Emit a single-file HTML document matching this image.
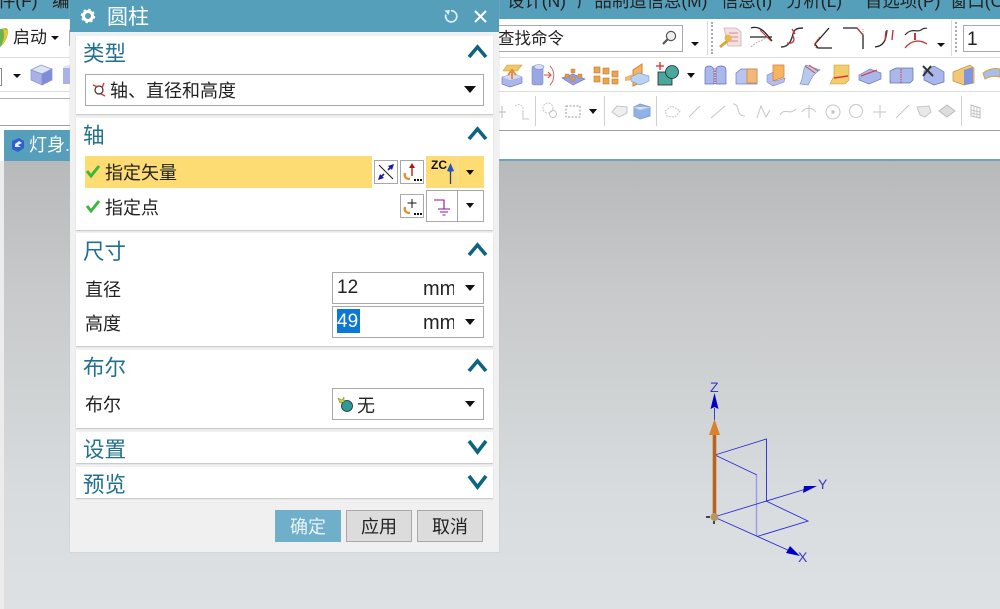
<!DOCTYPE html>
<html><head><meta charset="utf-8">
<style>
*{box-sizing:border-box}
html,body{margin:0;padding:0;width:1000px;height:609px;overflow:hidden;background:#fff}
body{position:relative;font-family:"Liberation Sans","Noto Sans CJK SC",sans-serif;color:#222}
.a{position:absolute}
.t{position:absolute;white-space:nowrap;line-height:1}
.sec{position:absolute;left:76px;width:417px;background:#fff;box-shadow:0 1px 1px #c4c4c4}
.h{position:absolute;left:83px;font-size:21.5px;color:#20708e;line-height:1;white-space:nowrap}
.l{position:absolute;font-size:18px;color:#222;line-height:1;white-space:nowrap}
.box{position:absolute;background:#fff;border:1px solid #a8a8a8}
.arr{position:absolute;width:0;height:0;border-left:6.5px solid transparent;border-right:6.5px solid transparent;border-top:7px solid #111}
.arrs{position:absolute;width:0;height:0;border-left:4.5px solid transparent;border-right:4.5px solid transparent;border-top:5px solid #111}
.btn{position:absolute;top:510px;width:66px;height:32px;background:#dcdcdc;border:1px solid #a8a8a8;font-size:18px;line-height:32px;text-align:center;color:#222}
svg{position:absolute;overflow:visible}
</style></head><body>

<!-- menu bar -->
<div class="a" style="left:0;top:0;width:1000px;height:19px;background:#569fbb"></div>
<div class="a" style="left:0;top:0;width:1000px;height:19px;overflow:hidden;font-size:17.4px;color:#222;line-height:24px;white-space:nowrap">
<span class="a" style="left:-2px;top:-11px">件(F)</span>
<span class="a" style="left:52px;top:-11px">编</span>
<span class="a" style="left:507px;top:-11px">设计(N)</span>
<span class="a" style="left:577px;top:-11px">产品制造信息(M)</span>
<span class="a" style="left:721px;top:-11px">信息(I)</span>
<span class="a" style="left:786px;top:-11px">分析(L)</span>
<span class="a" style="left:865px;top:-11px">首选项(P)</span>
<span class="a" style="left:950px;top:-11px">窗口(O)</span>
</div>

<!-- toolbar lines -->
<div class="a" style="left:0;top:57px;width:1000px;height:1px;background:#dedede"></div>
<div class="a" style="left:0;top:91px;width:1000px;height:1px;background:#dedede"></div>
<div class="a" style="left:499px;top:130px;width:501px;height:1px;background:#a0a0a0"></div>
<div class="a" style="left:0;top:98px;width:72px;height:1px;background:#b0b0b0"></div>
<div class="a" style="left:0;top:125px;width:72px;height:1px;background:#a0a0a0"></div>
<div class="a" style="left:499px;top:159px;width:501px;height:3px;background:#6ba3b9"></div>

<!-- viewport -->
<div class="a" style="left:4px;top:161px;width:996px;height:448px;background:linear-gradient(#b7b9ba,#c8cacb 30%,#d8dcde 75%,#dde1e3)"></div>
<div class="a" style="left:0;top:161px;width:4px;height:448px;background:#ececec"></div>

<!-- tab -->
<div class="a" style="left:4px;top:130px;width:68px;height:31px;background:#569fbb"></div>
<div class="t" style="left:29px;top:136px;font-size:18px;color:#fff">灯身.</div>
<svg style="left:10px;top:137px" width="16" height="16" viewBox="0 0 16 16"><path d="M2 4 9 1 14 4V11L8 15 2 12Z" fill="#2f5fd0"/><path d="M9 4 5 7V10L11 10 8 8 12 6Z" fill="#e8eeff"/></svg>

<!-- toolbar left -->
<svg style="left:0;top:27px" width="26" height="22" viewBox="0 0 26 22"><path d="M-2 3C6 0 8 1 8 4 8 11 4 17 0 20-3 17-4 8-2 3Z" fill="#6fb24a"/><path d="M3 2 8 3C8 10 4 16 1 19 4 13 5 8 3 2Z" fill="#e8c63c"/></svg>
<div class="t" style="left:13px;top:29px;font-size:17px">启动</div>
<div class="arrs" style="left:51px;top:36px;border-left-width:4px;border-right-width:4px;border-top-width:4px"></div>
<div class="a" style="left:69px;top:30px;width:1px;height:16px;background:#aaa"></div>
<div class="a" style="left:-6px;top:68px;width:8px;height:18px;border:1px solid #888;background:#fff"></div>
<div class="arrs" style="left:13px;top:74px;border-left-width:4px;border-right-width:4px;border-top-width:4px"></div>
<svg style="left:30px;top:64px" width="24" height="22" viewBox="0 0 24 22"><path d="M1 6 11 1 22 5 12 10Z" fill="#dfe3f6" stroke="#8a94c8" stroke-width=".7"/><path d="M1 6 12 10V21L1 16Z" fill="#a9b2e6" stroke="#8a94c8" stroke-width=".7"/><path d="M22 5 12 10V21L22 16Z" fill="#7f8cda" stroke="#8a94c8" stroke-width=".7"/></svg>
<svg style="left:62px;top:64px" width="10" height="22" viewBox="0 0 10 22"><ellipse cx="8" cy="4" rx="7" ry="3" fill="#dfe3f6"/><rect x="1" y="4" width="9" height="16" fill="#a9b2e6"/></svg>

<!-- search box -->
<div class="box" style="left:497px;top:25px;width:186px;height:27px;border-left:0"></div>
<div class="t" style="left:498px;top:31px;font-size:16.5px">查找命令</div>
<svg style="left:660px;top:29px" width="18" height="18" viewBox="0 0 18 18" fill="none" stroke="#555"><circle cx="11" cy="7" r="4.6" stroke-width="1.2" fill="#eee"/><path d="M7.6 10.4 3 15" stroke-width="2.2"/></svg>
<div class="arrs" style="left:691px;top:42px;border-top-width:4px;border-left-width:4px;border-right-width:4px"></div>
<div class="a" style="left:707px;top:21px;width:0;height:34px;border-left:1px solid #ddd"></div>
<div class="a" style="left:711px;top:22px;width:0;height:32px;border-left:2px dotted #aaa"></div>

<svg style="left:0;top:0" width="1000" height="160" viewBox="0 0 1000 160" fill="none">
<!-- row 1 curve icons -->
<path d="M724 28h12l5 4v14h-13z" fill="#f6dfe0" stroke="#c9b2b8" stroke-width=".8"/>
<path d="M729 33h9M729 37h9M729 41h9" stroke="#d98a90"/>
<path d="M720 47 731 38" stroke="#d9a441" stroke-width="3"/><circle cx="728" cy="38" r="3.5" fill="#e6b84f"/>
<path d="M750 37H772" stroke="#222" stroke-width="1.2"/><path d="M751 28C760 25 766 33 772 41" stroke="#222" stroke-width="1.3"/><path d="M751 47C757 41 762 41 769 36" stroke="#c0a9a9" stroke-dasharray="2 1"/><path d="M760 30 771 41" stroke="#d33" stroke-width="1.1"/>
<path d="M781 47C790 47 792 38 793 34 794 30 796 28 803 28" stroke="#333" stroke-width="1.4"/><path d="M792 29 795 34M787 43C794 44 795 40 793 36" stroke="#c33" stroke-width="1.3"/>
<path d="M829 28 815 44 818 48H832" stroke="#222" stroke-width="1.3"/><path d="M820 37C815 42 813 46 817 48" stroke="#c33" stroke-dasharray="2 1"/>
<path d="M843 28H857L863 35V49" stroke="#222" stroke-width="1.3"/><path d="M857 28 863 35" stroke="#c33"/><path d="M863 29V35" stroke="#aaa" stroke-dasharray="1 1"/>
<path d="M875 47C884 46 886 40 887 30" stroke="#222" stroke-width="1.3"/><path d="M886 31 885 41M893 30 892 40" stroke="#c33" stroke-width="1.4"/>
<path d="M905 35C912 27 917 33 921 30 925 27 926 29 927 28" stroke="#333" stroke-width="1.2"/><path d="M905 48C912 39 921 40 927 44" stroke="#c33" stroke-width="1.3"/><path d="M915 33 915 40" stroke="#c33" stroke-width="2"/>
<path d="M937 43h8l-4 4z" fill="#111"/>
<path d="M951.500 20V56" stroke="#ddd"/>
<path d="M956 22V54" stroke="#aaa" stroke-width="2" stroke-dasharray="2 2"/>

<!-- row 2 -->
<path d="M503 71 507 65H522L517 71Z" fill="#f2c766" stroke="#c59a3c" stroke-width=".6"/>
<path d="M502 77 514 74 522 77V83L510 87 502 84Z" fill="#a9b7ea" stroke="#6f7cd0" stroke-width=".7"/>
<path d="M502 77 510 80 522 77 514 74Z" fill="#d4daf5"/>
<path d="M512 72V79M508 75 512 70 516 75" stroke="#e28a2d" stroke-width="1.800"/>
<rect x="532" y="66" width="11" height="19" rx="2" fill="#98a7e2" stroke="#7a88c8" stroke-width=".6"/><ellipse cx="539" cy="67" rx="5" ry="2.500" fill="#d6dcf4" stroke="#7a88c8" stroke-width=".6"/>
<path d="M544 75H551M548 72 551 75 548 78" stroke="#d84a3a" stroke-width="1.100"/><path d="M550 66C555 71 555 80 550 85" stroke="#c66"/>
<path d="M562 78 573 74 585 79 573 85Z" fill="#8fa3e6" stroke="#6f7cd0" stroke-width=".7"/>
<g fill="#e09a4a" stroke="#b87730" stroke-width=".4"><rect x="565" y="74" width="4" height="4"/><rect x="571" y="69" width="4" height="4"/><rect x="578" y="74" width="4" height="4"/><rect x="571" y="77" width="4" height="4"/></g>
<g fill="#eba550" stroke="#c2762a" stroke-width=".6"><rect x="594" y="67" width="6" height="6"/><rect x="603" y="68" width="6" height="6"/><rect x="612" y="71" width="6" height="6"/><rect x="594" y="76" width="6" height="6"/><rect x="603" y="78" width="6" height="6"/><rect x="612" y="79" width="6" height="5"/></g>
<path d="M633 70 642 64V82L633 86Z" fill="#f4b45e" stroke="#db7a2b"/><path d="M625 77 633 74V80L625 81Z" fill="#f2b868"/><path d="M631 77 639 73 649 76 649 81 640 85 631 81Z" fill="#b8d3f2" stroke="#7a94d0" stroke-width=".6"/>
<rect x="658" y="72" width="14" height="13" fill="#49a89a" stroke="#224" stroke-width=".8"/><circle cx="672" cy="72" r="6.500" fill="#49a89a" stroke="#224" stroke-width=".8"/><path d="M656 66H664M660 62V70" stroke="#e22" stroke-width="1.300"/>
<path d="M687 73h8l-4 5z" fill="#111"/>
<path d="M705 84V70Q705 66 709 66T714 70V84Z" fill="#a9b7ea" stroke="#5f6fbd" stroke-width=".7"/><path d="M716 84V70Q716 66 721 66T726 70V84Z" fill="#a9b7ea" stroke="#5f6fbd" stroke-width=".7"/><path d="M715 68V84" stroke="#d44" stroke-dasharray="1.500 1"/>
<path d="M736 73 741 69H757V84H736Z" fill="#b9c4ef" stroke="#6f7cd0" stroke-width=".7"/><rect x="747" y="69" width="10" height="14" fill="#f1b878" stroke="#d7812f" stroke-width=".7"/>
<path d="M767 75 776 71V81L785 78 784 82 773 86 767 82Z" fill="#b3bff0" stroke="#7a88c8" stroke-width=".6"/><path d="M773 65H784V77L773 81Z" fill="#f3b562" stroke="#db7a2b" stroke-width=".7"/>
<path d="M800 84C804 77 802 70 806 65L820 70C813 74 812 78 808 85Z" fill="#b8c9ef" stroke="#7a94d0" stroke-width=".7"/><path d="M805 66 815 73M809 65 818 71" stroke="#d84a3a"/>
<path d="M830 84 834 76V65H849V80L845 84Z" fill="#f2cd6c" stroke="#c69a36" stroke-width=".6"/><path d="M834 78 848 76" stroke="#d33" stroke-width="1.400"/>
<path d="M859 75 870 69 881 73V79L869 84 859 80Z" fill="#a9b7ea" stroke="#6f7cd0" stroke-width=".7"/><path d="M861 76 877 70" stroke="#d33" stroke-width="1.100"/>
<path d="M890 71 896 68H913V80L910 83H890Z" fill="#a9b7ea" stroke="#5f6fbd" stroke-width=".7"/><path d="M901 69V83" stroke="#d33" stroke-dasharray="1.500 1"/>
<path d="M924 71 934 66 944 72V82L934 85 924 80Z" fill="#a9b7ea" stroke="#5f6fbd" stroke-width=".7"/><path d="M923 66 933 76M931 66 923 76" stroke="#333" stroke-width="2"/>
<path d="M953 72 970 65 974 68V83L964 85 953 81Z" fill="#f1c878" stroke="#c6923a" stroke-width=".7"/><path d="M964 70 973 67V83L964 85Z" fill="#7f95dd"/>
<path d="M983 73C990 68 996 68 1000 69V77C994 76 990 76 985 79Z" fill="#a9bde9" stroke="#d2a33c"/>

<!-- row 3 gray -->
<g stroke="#c6c6c6" stroke-width="1">
<path d="M497 112 H506 M502 106V118" stroke="#bbb"/>
<path d="M515 106C520 102 524 107 523 110" stroke-dasharray="2 1"/><path d="M523 110V119H529" />
<circle cx="548" cy="108" r="5" stroke-dasharray="2 1"/><circle cx="553" cy="114" r="3.500"/>
<rect x="566" y="106" width="14" height="11" stroke-dasharray="2 1.500" stroke="#999"/>
<path d="M535.500 96V126M604.500 96V126M656.500 96V126M961.500 96V126" stroke="#d0d0d0"/>
<path d="M612 112 617 106 627 107 627 113 619 117Z" fill="#eee"/>
<path d="M634 107 640 104 650 107 650 116 640 119 634 116Z" fill="#8fb2e8" stroke="#7fa0d8"/><path d="M634 107 640 110 650 107" fill="#d8e3f5"/>
<path d="M665 111 672 106 680 111 675 117 667 116Z" stroke-dasharray="2 1"/>
<path d="M689 117 700 106"/><path d="M711 118 725 106"/><path d="M733 104C741 104 735 116 745 116"/>
<path d="M757 118 761 106 766 117 770 110"/><path d="M780 115C785 107 789 116 796 109"/>
<path d="M802 112C805 107 812 107 816 112M809 105V118"/>
<circle cx="833" cy="112" r="7"/><circle cx="833" cy="112" r="1.200" fill="#bbb"/><circle cx="856" cy="111" r="6.500"/><path d="M873 112H886M880 105V118"/><path d="M896 118 909 105"/>
<path d="M917 107 929 106 931 112 925 117 920 115Z" fill="#e8e8e8"/>
<path d="M939 111 947 105 955 111 947 117Z" fill="#ddd" stroke="#bbb"/>
<path d="M971 105 980 108V118L971 116Z" stroke="#bbb"/><path d="M974 106V117M977 107V118M971 110 980 112M971 113 980 115"/>
</g>
<path d="M589 109h8l-4 5z" fill="#111"/>
</svg>

<!-- box "1" -->
<div class="box" style="left:963px;top:25px;width:45px;height:27px"></div>
<div class="t" style="left:967px;top:30px;font-size:19px">1</div>

<!-- triad -->
<svg style="left:0;top:0" width="1000" height="609" viewBox="0 0 1000 609" fill="none">
<g stroke="#2a2ad8" stroke-width=".9">
<path d="M715 455 766.500 439V501M715 455 757 475"/>
<path d="M756.500 475V536.500" stroke="#9a9af0" stroke-width="1.400"/>
<path d="M766 501 808 521 757 536.500M714 517 806 489M714 517 790 551"/>
<path d="M714.500 420V408"/>
</g>
<path d="M714.500 393 718.500 409 714.500 407 710.500 409Z" fill="#0000c8"/>
<path d="M817 486 803 493 804 486Z" fill="#0000c8"/>
<path d="M800 556 786 553 790 546Z" fill="#0000c8"/>
<path d="M714.500 432V516" stroke="#b8651b" stroke-width="3.600"/>
<path d="M714.500 419 720 435H709Z" fill="#d9822b"/>
<circle cx="714.500" cy="517" r="4" fill="#b49a5e"/>
<path d="M706 517H710M714 521V524" stroke="#112" stroke-width="1.500"/>
</svg>
<div class="t" style="left:710px;top:380px;font-size:14px;color:#3a3ac0">Z</div>
<div class="t" style="left:818px;top:477px;font-size:14px;color:#3a3ac0">Y</div>
<div class="t" style="left:798px;top:550px;font-size:14px;color:#3a3ac0">X</div>

<!-- dialog -->
<div class="a" style="left:70px;top:0;width:429px;height:552px;background:#f0f0f0;box-shadow:0 0 1px #bbb"></div>
<div class="a" style="left:70px;top:0;width:429px;height:32px;background:#569fbb"></div>
<svg style="left:80px;top:8px" width="16" height="16" viewBox="0 0 16 16"><circle cx="8" cy="8" r="4.500" fill="none" stroke="#fff" stroke-width="3"/><circle cx="8" cy="8" r="6.200" fill="none" stroke="#fff" stroke-width="2" stroke-dasharray="2.400 2.470"/></svg>
<div class="t" style="left:107px;top:7px;font-size:21px;color:#fff">圆柱</div>
<svg style="left:444px;top:9px" width="15" height="15" viewBox="0 0 15 15" fill="none"><path d="M7 1.700A5.600 5.600 0 1 1 1.900 5.500" stroke="#dfeef4" stroke-width="1.700"/><path d="M.5 1.500 6 1 4.500 6Z" fill="#dfeef4"/></svg>
<svg style="left:474px;top:10px" width="13" height="13" viewBox="0 0 13 13"><path d="M1 1 12 12M12 1 1 12" stroke="#fff" stroke-width="2"/></svg>

<div class="sec" style="top:36px;height:78px"></div>
<div class="sec" style="top:118px;height:112px"></div>
<div class="sec" style="top:233px;height:113px"></div>
<div class="sec" style="top:350px;height:78px"></div>
<div class="sec" style="top:432px;height:31px"></div>
<div class="sec" style="top:467px;height:31px"></div>

<div class="h" style="top:44px">类型</div>
<div class="h" style="top:126px">轴</div>
<div class="h" style="top:242px">尺寸</div>
<div class="h" style="top:358px">布尔</div>
<div class="h" style="top:440px">设置</div>
<div class="h" style="top:475px">预览</div>

<svg style="left:0;top:0" width="500" height="500" viewBox="0 0 500 500" fill="none" stroke="#0d6480" stroke-width="3.600">
<path d="M469 57 477.500 47 486 57"/><path d="M469 139 477.500 129 486 139"/><path d="M469 255 477.500 245 486 255"/><path d="M469 371 477.500 361 486 371"/>
<path d="M469 441 477.500 452 486 441"/><path d="M469 476 477.500 487 486 476"/>
</svg>

<!-- type dropdown -->
<div class="box" style="left:85px;top:74px;width:399px;height:32px"></div>
<svg style="left:92px;top:82px" width="16" height="16" viewBox="0 0 16 16" fill="none"><circle cx="7" cy="8" r="4" stroke="#333" stroke-width="1.200"/><path d="M1 3 6 5M12 1 10 6M9 12 13 14" stroke="#d33" stroke-width="1.400"/></svg>
<div class="l" style="left:110px;top:82px">轴、直径和高度</div>
<div class="arr" style="left:464px;top:86px"></div>

<!-- axis rows -->
<div class="a" style="left:85px;top:156px;width:287px;height:32px;background:#fddd73"></div>
<svg style="left:86px;top:164px" width="14" height="14" viewBox="0 0 14 14"><path d="M1 7 5 12 13 2" fill="none" stroke="#3cb73c" stroke-width="3"/></svg>
<div class="l" style="left:105px;top:164px">指定矢量</div>
<svg style="left:86px;top:199px" width="14" height="14" viewBox="0 0 14 14"><path d="M1 7 5 12 13 2" fill="none" stroke="#3cb73c" stroke-width="3"/></svg>
<div class="l" style="left:105px;top:199px">指定点</div>

<div class="box" style="left:374px;top:160px;width:24px;height:24px"></div>
<svg style="left:374px;top:160px" width="24" height="24" viewBox="0 0 24 24" fill="none"><path d="M5 5 19 19" stroke="#222" stroke-width="1.100"/><path d="M19 5 14 10M5 19 10 14" stroke="#1a1ab0" stroke-width="1.600"/><path d="M20 4 14 6 18 10ZM4 20 10 18 6 14Z" fill="#1a1ab0"/></svg>
<div class="box" style="left:400px;top:160px;width:24px;height:24px"></div>
<svg style="left:400px;top:160px" width="24" height="24" viewBox="0 0 24 24" fill="none"><path d="M12 16V7" stroke="#a11" stroke-width="1.300"/><path d="M12 3 15 8H9Z" fill="#b11"/><path d="M5 13C4 17 6 19 10 19" stroke="#e09030" stroke-width="2.400"/><path d="M14 19h2v2h-2zM17 19h2v2h-2zM20 19h2v2h-2z" fill="#111"/></svg>

<div class="a" style="left:426px;top:156px;width:58px;height:32px;background:#fddd73"></div>
<div class="a" style="left:457px;top:156px;width:1px;height:32px;background:#e9e0b8"></div>
<div class="t" style="left:431px;top:159px;font-size:12px;font-weight:bold;color:#111">ZC</div>
<svg style="left:445px;top:160px" width="12" height="26" viewBox="0 0 12 26"><path d="M5.500 10V24" stroke="#2a3f8a" stroke-width="1.300"/><path d="M5.500 3 9 11 5.500 12 2 11Z" fill="#1f56c0"/></svg>
<div class="arrs" style="left:466px;top:170px"></div>

<div class="box" style="left:400px;top:194px;width:24px;height:24px"></div>
<svg style="left:400px;top:194px" width="24" height="24" viewBox="0 0 24 24" fill="none"><path d="M12 5V14M7.500 9H16.500" stroke="#111" stroke-width="1"/><path d="M5 13C4 17 6 19 10 19" stroke="#e09030" stroke-width="2.400"/><path d="M14 19h2v2h-2zM17 19h2v2h-2zM20 19h2v2h-2z" fill="#111"/></svg>
<div class="box" style="left:426px;top:190px;width:58px;height:32px"></div>
<div class="a" style="left:457px;top:190px;width:1px;height:32px;background:#a8a8a8"></div>
<svg style="left:426px;top:190px" width="31" height="32" viewBox="0 0 31 32" fill="none" stroke="#90109a" stroke-width="1.100"><path d="M8 10H18V19M12 19H24M14 22H22M16.500 25H19.500"/></svg>
<div class="arrs" style="left:466px;top:203px"></div>

<!-- dimension rows -->
<div class="l" style="left:85px;top:281px">直径</div>
<div class="l" style="left:85px;top:315px">高度</div>
<div class="box" style="left:332px;top:272px;width:152px;height:32px"></div>
<div class="box" style="left:332px;top:306px;width:152px;height:32px"></div>
<div class="t" style="left:337px;top:278px;font-size:19px">12</div>
<div class="a" style="left:337px;top:309px;width:23px;height:24px;background:#0a78d7"></div>
<div class="t" style="left:337px;top:312px;font-size:19px;color:#fff">49</div>
<div class="t" style="left:423px;top:279px;width:31px;overflow:hidden;font-size:20px;height:20px">mm</div>
<div class="t" style="left:423px;top:313px;width:31px;overflow:hidden;font-size:20px;height:20px">mm</div>
<div class="arr" style="left:465px;top:285px;border-left-width:5.500px;border-right-width:5.500px;border-top-width:6px"></div>
<div class="arr" style="left:465px;top:319px;border-left-width:5.500px;border-right-width:5.500px;border-top-width:6px"></div>

<!-- boolean -->
<div class="l" style="left:85px;top:396px">布尔</div>
<div class="box" style="left:332px;top:388px;width:152px;height:32px"></div>
<svg style="left:337px;top:395px" width="18" height="18" viewBox="0 0 18 18"><circle cx="10" cy="11" r="5.500" fill="#2f9c92" stroke="#124" stroke-width=".8"/><path d="M1 3 5 5 7 2 7 7 3 8Z" fill="#c9d23a" stroke="#6a7a20" stroke-width=".5"/></svg>
<div class="l" style="left:357px;top:397px">无</div>
<div class="arr" style="left:465px;top:401px;border-left-width:5.500px;border-right-width:5.500px;border-top-width:6px"></div>

<!-- buttons -->
<div class="btn" style="left:275px;background:#6fafc9;border-color:#6fafc9;color:#e8f3f8">确定</div>
<div class="btn" style="left:346px">应用</div>
<div class="btn" style="left:417px">取消</div>

</body></html>
